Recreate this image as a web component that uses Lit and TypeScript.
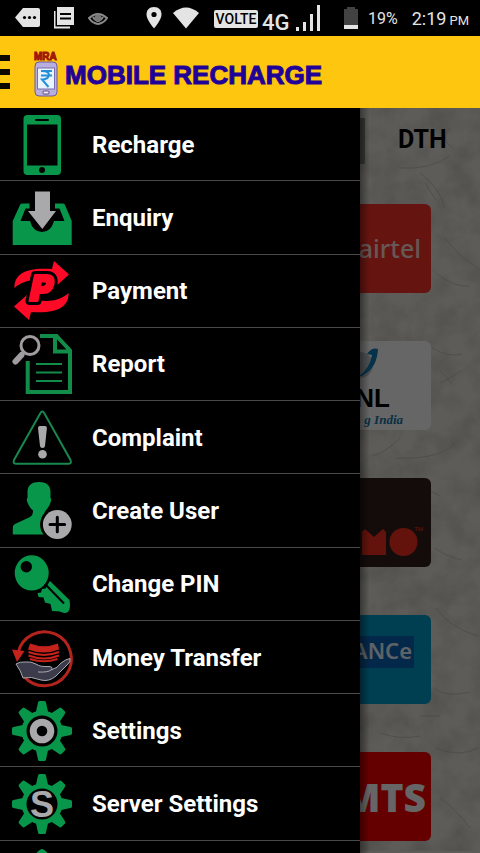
import { LitElement, html, svg, css } from "lit";
import { customElement } from "lit/decorators.js";

const teeth = [0, 45, 90, 135, 180, 225, 270, 315];
const gear = svg`
  ${teeth.map((a) => svg`<path class="green" d="M23.500 13L26 1.500Q26.200 0 27.500 0H32.500Q33.800 0 34 1.500L36.500 13Z" transform="rotate(${a} 30 30)"/>`)}
  <circle class="green" cx="30" cy="30" r="20.500"/>
  <circle cx="30" cy="30" r="15.500"/>`;

const arrow = svg`<path class="red" d="M2.500 27C2 13 14 6 40 8L42 0L57 13.500L43 26L41 22C28 17 12 18 2.500 27Z"/>`;

const icons: Record<string, unknown> = {
  phone: svg`
    <rect class="green" x="11.500" width="37.500" height="60" rx="4"/>
    <rect x="15" y="9.500" width="30.500" height="41"/>
    <rect x="23" y="4" width="14" height="2" rx="1"/>
    <circle cx="30" cy="55" r="3"/>`,
  tray: svg`
    <path class="green" d="M10 15.500H17.500V20.500H13.500L8.500 33H18Q21 44 30 44Q39 44 42 33H52.500L47.500 20.500H43V15.500H51Q52.500 15.500 53 17L59.700 33V57H.700V33L8 17Q8.500 15.500 10 15.500Z"/>
    <path class="grey" d="M23 3.500H38V23H44L30.300 41L16 23H23Z"/>`,
  payment: svg`
    ${arrow}<g transform="rotate(180 29.500 29.500)">${arrow}</g>
    <path class="p back" d="M23 14H35Q43 14 41.500 23Q39.500 32 31 32H27L25.500 40H17.500Z"/>
    <path class="p front" d="M23 14H35Q43 14 41.500 23Q39.500 32 31 32H27L25.500 40H17.500ZM29 20.500L28 26H31.500Q34.500 25.500 35 22.500Q35 20.500 33 20.500Z"/>`,
  report: svg`
    <path class="doc" d="M28 2H44.500L58 16.500V58H15.700V27M43 2V17.500H58"/>
    <path class="lines" d="M24 30H50M24 38.500H50M24 47H50"/>
    <circle class="lens" cx="18" cy="11.500" r="9"/>
    <path class="handle" d="M9.500 21L3.500 27.500"/>`,
  complaint: svg`
    <path class="warn" d="M28.300 5.200Q30.300 2 32.300 5.200L58.500 52Q60 55.800 56 55.800H4.500Q.500 55.800 2 52Z"/>
    <path class="grey" d="M26 20Q26 18 28 18H33Q35 18 34.900 20L33 38Q32.800 40 30.500 40Q28.200 40 28 38Z"/>
    <circle class="grey" cx="30.500" cy="46.200" r="4.300"/>`,
  user: svg`
    <path class="green" d="M15.500 11C15.500 4 20 1 27 1C34 1 38.500 4 38.500 11V17Q40 18 38.500 21.500C37 26 35 28 33 30.500C32 34 34 36 36 36.500L34 53.500H.800V46Q1 44 3 43L18 36Q21.500 33.500 21 29.500C18 27 17 25 15.500 21.500Q14 18 15.500 17Z"/>
    <circle cx="45.300" cy="43.500" r="17.200"/>
    <circle class="grey" cx="45.300" cy="43.500" r="14.400"/>
    <path class="plus" d="M38 43.500H52.600M45.300 36.200V50.800"/>`,
  key: svg`
    <ellipse class="green" cx="19.700" cy="18.900" rx="17" ry="17.700"/>
    <circle cx="14.300" cy="12.700" r="5.700"/>
    <path class="green" d="M38 27L57.500 46Q59 54 56 58Q52 60 48 57.500L40 57L38.500 50L33 48.500L31.500 43.500L26.500 43L25.500 39L29 38.500L30 35L33.500 34.500L36 30Z"/>
    <path class="slot" d="M33 30L52 49.500"/>`,
  money: svg`
    <path class="ring" d="M6 25A27 27 0 1 1 12 48.500"/>
    <path class="brick" d="M0 21.500L12.500 23L5 34Z"/>
    <path class="brick" d="M18 15.500Q32 21 46 15.500L47 21.500Q32 27.500 16 21.500Z"/>
    <path class="notes" d="M16.500 24Q32 30 47 24M16.500 27.500Q32 33.500 47 27.500M18 31Q32 35.500 45.500 31"/>
    <path class="hand" d="M4 36Q8 33.500 13 34Q19 33 25 36.500Q28 39 37 38.500Q42 39 39 42Q46 40 49 35Q54 31 58 30.500Q59 34 55 37L44 48Q37 54 29 52Q19 48 11 50Q9 43 4 36Z"/>
    <path class="palm" d="M39 42Q36 44.500 26 44"/>`,
  settings: svg`${gear}<circle class="hub" cx="30" cy="30" r="8.800"/>`,
  server: svg`${gear}<text class="s" x="18" y="43">S</text>`,
  more: svg`<path class="green" d="M14 16L27 3.500Q30 .500 33 3.500L46 16V60H14Z"/>`,
};

const items: [string, string][] = [
  ["phone", "Recharge"],
  ["tray", "Enquiry"],
  ["payment", "Payment"],
  ["report", "Report"],
  ["complaint", "Complaint"],
  ["user", "Create User"],
  ["key", "Change PIN"],
  ["money", "Money Transfer"],
  ["settings", "Settings"],
  ["server", "Server Settings"],
  ["more", ""],
];

@customElement("status-bar")
class StatusBar extends LitElement {
  static styles = css`
    :host { display: flex; align-items: center; height: 36px; padding: 0 11px 0 15px; background: #000; color: #e4e4e4; font-family: Roboto, sans-serif; }
    .group { display: flex; align-items: center; gap: 14px; }
    .place { gap: 10px; margin-left: auto; margin-right: 14px; }
    .net { gap: 4px; margin-right: 22px; }
    .power { gap: 10px; margin-right: 14px; font-size: 16px; }
    .time { font-size: 18px; white-space: nowrap; }
    .time small { font-size: 13px; margin-left: 3px; }
    svg { display: block; fill: #e4e4e4; }
    .cut { fill: none; stroke: #000; stroke-width: 2; }
    .dot { fill: #000; }
    .dim { fill: none; stroke: #8a8a8a; stroke-width: 2; }
    .pupil { fill: #777; }
    .volte { display: flex; align-items: center; justify-content: center; width: 44px; height: 18px; margin-top: 2px; border-radius: 2px; background: #e4e4e4; color: #000; font-size: 14px; font-weight: 500; }
    .gen { width: 28px; margin-top: 8px; font-size: 22px; font-weight: 500; }
    .empty { fill: #424242; }
  `;
  render() {
    return html`
      <div class="group">
        <svg width="25" height="20"><path d="M8 0H23Q25 0 25 2V17Q25 19 23 19H8L0 9.500Z"/><g class="dot"><circle cx="9.500" cy="9.500" r="1.600"/><circle cx="14.500" cy="9.500" r="1.600"/><circle cx="19.500" cy="9.500" r="1.600"/></g></svg>
        <svg width="20" height="22"><path d="M3 0H20V18H3ZM0 4H1.500V19.500H16V21.500H0Z"/><path class="cut" d="M6 7H17M6 11.500H17"/></svg>
        <svg width="20" height="14"><path class="dim" d="M1 7Q10-1 19 7Q16 12 10 13Q4 12 1 7ZM5 6Q10 14 15 6"/><circle class="pupil" cx="10" cy="7" r="3.500"/></svg>
      </div>
      <div class="group place">
        <svg width="16" height="22"><path d="M8 0C3 0 .500 3.500 .500 7.500C.500 13 8 21.500 8 21.500S15.500 13 15.500 7.500C15.500 3.500 13 0 8 0Z"/><circle class="dot" cx="8" cy="7.500" r="2.600"/></svg>
        <svg width="28" height="22"><path d="M1 6Q14-5 27 6L14 21.500Z"/></svg>
      </div>
      <div class="group net">
        <span class="volte">VOLTE</span>
        <span class="gen">4G</span>
        <svg width="28" height="26"><path d="M2 22H5V26H2ZM9 17H12V26H9ZM16 9H19V26H16ZM23 0H26V26H23Z"/></svg>
      </div>
      <div class="group power">
        <svg width="14" height="22"><path class="empty" d="M0 2H3V0H11V2H14V18H0Z"/><rect y="18" width="14" height="4"/></svg>
        <span>19%</span>
      </div>
      <span class="time">2:19<small>PM</small></span>`;
  }
}

@customElement("title-bar")
class TitleBar extends LitElement {
  static styles = css`
    :host { display: flex; align-items: center; height: 72px; background: #ffc60f; }
    .menu { width: 10px; height: 34px; padding: 0; border: 0; margin-right: 24px; background: none; display: flex; flex-direction: column; justify-content: space-between; }
    .menu span { height: 6px; width: 10px; background: #0a0800; }
    .title { margin: 0; padding: 6px 0 0 6px; font: bold 26px "Liberation Sans", sans-serif; color: #1c029c; -webkit-text-stroke: 1px #2a0390; white-space: nowrap; }
    .logo { margin-top: 4px; }
    .mra { font: 900 10px "Liberation Sans", sans-serif; fill: #a01808; stroke: #a01808; stroke-width: 1; }
    .case { fill: #b9aede; stroke: #6b5a9a; stroke-width: 1; }
    .screen { fill: #eaf4fd; stroke: #7a6db0; }
    .rupee { fill: none; stroke: #2391d8; stroke-width: 2; }
    .home { fill: #eee; stroke: #5b4c86; }
  `;
  render() {
    return html`
      <button class="menu" aria-label="Close menu"><span></span><span></span><span></span></button>
      <svg class="logo" width="25" height="46">
        <text class="mra" x="0" y="9">MRA</text>
        <rect class="case" x="1" y="11" width="22" height="34" rx="4"/>
        <rect class="screen" x="3.500" y="17" width="17" height="21"/>
        <path class="rupee" d="M7 20H18M7 24.500H18M8 20Q15 20 15 24Q14 28.500 8 28.500L14.500 36"/>
        <rect class="home" x="9" y="40" width="6" height="3" rx="1"/>
      </svg>
      <h1 class="title">MOBILE RECHARGE</h1>`;
  }
}

@customElement("nav-drawer")
class NavDrawer extends LitElement {
  static styles = css`
    :host { display: block; overflow: hidden; background: #000; }
    .list { margin: 0; padding: 0; list-style: none; display: grid; grid-auto-rows: 1fr; height: 806px; }
    .row { border-bottom: 1px solid #4a4a4a; display: grid; }
    .item { display: flex; align-items: center; gap: 20px; width: 100%; padding: 1px 12px 0; border: 0; background: none; color: #fff; font: bold 24px Roboto, sans-serif; text-align: left; white-space: nowrap; }
    .icon { flex: none; display: block; overflow: visible; fill: #000; }
    .green { fill: #07964a; }
    .grey { fill: #a9a9ab; }
    .red { fill: #ff0a26; }
    .p { stroke-linejoin: round; }
    .back { stroke: #000; stroke-width: 8; }
    .front { fill: #ff0a26; stroke: #ff0a26; stroke-width: 2; fill-rule: evenodd; }
    .doc { fill: none; stroke: #128d49; stroke-width: 4; }
    .lines { stroke: #128d49; stroke-width: 2; }
    .lens { stroke: #a09ca0; stroke-width: 3; }
    .handle { stroke: #a09ca0; stroke-width: 6; stroke-linecap: round; }
    .warn { stroke: #17884f; stroke-width: 2; }
    .plus { stroke: #000; stroke-width: 3; stroke-linecap: round; }
    .slot { stroke: #000; stroke-width: 2; }
    .ring { fill: none; stroke: #b5231d; stroke-width: 3; }
    .brick { fill: #c4221b; }
    .notes { fill: none; stroke: #c4221b; stroke-width: 2; }
    .hand { fill: #3b3b4b; stroke: #aaaab2; stroke-width: 1; }
    .palm { fill: none; stroke: #aaaab2; stroke-width: 1; }
    .hub { fill: #000; stroke: #a9a9ab; stroke-width: 7; }
    .s { fill: #a9a9ab; font: bold 36px "Liberation Sans", sans-serif; }
  `;
  render() {
    return html`<ul class="list">
      ${items.map(
        ([icon, label]) => html`<li class="row">
          <button class="item" aria-label=${label || "More"}>
            <svg class="icon" width="60" height="60">${icons[icon]}</svg>${label}
          </button>
        </li>`
      )}
    </ul>`;
  }
}

const operators = [
  { name: "airtel", art: svg`<text class="word" x="140" y="54">airtel</text>` },
  {
    name: "bsnl",
    art: svg`<circle class="globe" cx="79" cy="24" r="13"/><path class="swoosh" d="M78 35Q89 27 91 14L86 13Q91 6 97 8Q96 26 84 33Q80 36 78 35Z"/>
      <text class="big" x="109" y="66">BSNL</text><text class="script" x="122" y="83">g India</text>`,
  },
  {
    name: "docomo",
    art: svg`<path class="shape" d="M81 77V54L84 51L93 59L102 51L105 54V77Z"/><circle class="shape" cx="122.500" cy="64" r="14"/><text class="tm" x="142" y="53">TM</text>`,
  },
  { name: "reliance", art: svg`<rect class="plate" x="40" y="21" width="93" height="32"/><text class="ance" x="131" y="44">ANCe</text>` },
  { name: "mts", art: svg`<text class="initials" x="145" y="60">MTS</text>` },
];

@customElement("recharge-page")
class RechargePage extends LitElement {
  static styles = css`
    :host { display: block; overflow: hidden; background: #e8e5dd; }
    .page { display: grid; grid-template-columns: minmax(0, 1fr); }
    .paper, .content { grid-area: 1 / 1; }
    .paper { width: 100%; height: 100%; }
    .content { padding: 10px 0; }
    .tabs { display: grid; grid-template-columns: 76% 1fr; }
    .tab { height: 46px; padding: 0 0 4px; border: 0; background: none; font: bold 25px Roboto, sans-serif; text-align: center; color: #000; }
    .on { background: #8d8c88; }
    .cards { display: flex; flex-direction: column; align-items: flex-end; gap: 48px; padding: 40px 49px 0 0; }
    .card { display: block; padding: 0; border: 0; width: 150px; height: 89px; border-radius: 6px; overflow: hidden; }
    .art { display: block; }
    text { text-anchor: end; }
    .airtel { background: #ff3428; }
    .bsnl { background: #fff; }
    .docomo { background: #30201c; }
    .reliance { background: #009cca; }
    .mts { background: #fc0000; }
    .word { fill: #ffdcd6; font: 500 25px "Noto Sans", sans-serif; }
    .globe { fill: #c4c8d0; }
    .swoosh { fill: #137fb8; }
    .big { font: bold 26px "Liberation Sans", sans-serif; }
    .script { fill: #1478a8; font: italic bold 13px "Liberation Serif", serif; }
    .shape { fill: #fb3020; }
    .tm { fill: #fb3020; font: 6px Roboto, sans-serif; }
    .plate { fill: #0865b8; }
    .ance { fill: #e8f6ff; font: 600 22px "Noto Sans", sans-serif; }
    .initials { fill: #fff; font: 800 39px "Open Sans", sans-serif; }
    .fibres { fill: none; stroke: #a8a59c; stroke-width: 1; opacity: 0.5; }
  `;
  render() {
    return html`<div class="page">
      <svg class="paper" aria-hidden="true">
        <filter id="grain" x="0" y="0" width="100%" height="100%" color-interpolation-filters="sRGB">
          <feTurbulence type="fractalNoise" baseFrequency="0.040" numOctaves="4" seed="8"/>
          <feColorMatrix values="0 0 0 0 .5  0 0 0 0 .49  0 0 0 0 .45  .5 0 0 0 -.180"/>
        </filter>
        <rect width="100%" height="100%" filter="url(#grain)"/>
        <path class="fibres" d="M420 65Q440 80 445 100M425 75L436 92M450 20Q440 30 452 40M400 60Q430 62 450 48M445 130Q460 150 478 160M436 165Q455 180 470 178M432 240Q450 250 462 246M440 262L452 276M440 275Q455 268 462 262M395 350Q440 352 455 335M425 380L440 388M434 440Q450 450 462 452M436 500Q450 520 478 528M434 580Q445 590 470 584M420 608H440M436 640Q460 650 478 640M440 690Q455 700 470 720M400 330Q385 345 372 348M380 625Q400 632 420 628"/>
      </svg>
      <div class="content">
        <div class="tabs"><button class="tab on" aria-label="Mobile"></button><button class="tab">DTH</button></div>
        <div class="cards">
          ${operators.map((o) => html`<button class="card ${o.name}" aria-label=${o.name}><svg class="art" width="150" height="89">${o.art}</svg></button>`)}
        </div>
      </div>
    </div>`;
  }
}

@customElement("app-root")
class AppRoot extends LitElement {
  static styles = css`
    :host { display: flex; flex-direction: column; height: 100vh; overflow: hidden; }
    .stage { position: relative; flex: 1; min-height: 0; overflow: hidden; display: grid; }
    .scrim { position: absolute; inset: 0; background: linear-gradient(90deg, rgba(0, 0, 0, 0.4) 75%, transparent 77%), rgba(0, 0, 0, 0.6); }
    .drawer { position: absolute; inset: 0 auto 0 0; width: 75%; }
  `;
  render() {
    return html`
      <status-bar></status-bar>
      <title-bar></title-bar>
      <main class="stage">
        <recharge-page></recharge-page>
        <div class="scrim"></div>
        <nav-drawer class="drawer"></nav-drawer>
      </main>`;
  }
}
